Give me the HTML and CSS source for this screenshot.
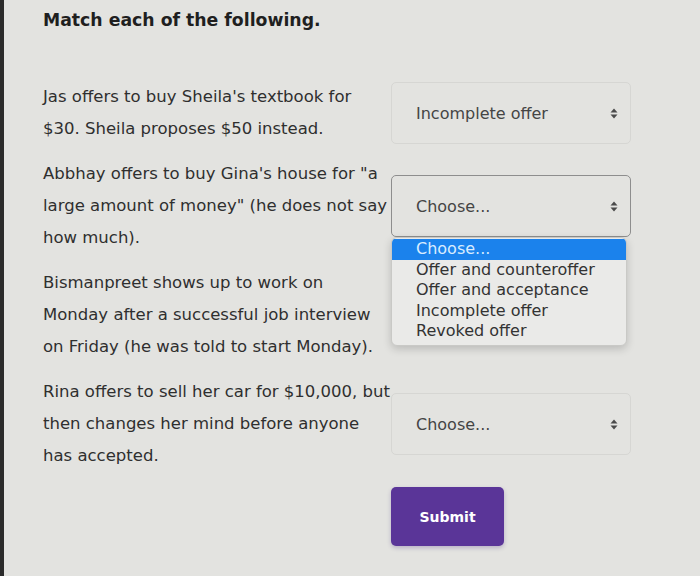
FILE: index.html
```html
<!DOCTYPE html>
<html lang="en">
<head>
<meta charset="utf-8">
<title>Match each of the following.</title>
<link rel="stylesheet" href="styles.css">
</head>
<body>
<main class="quiz">
  <h1 class="title">Match each of the following.</h1>
  <div class="rows">
    <div class="row">
      <p class="prompt">Jas offers to buy Sheila's textbook for $30. Sheila proposes $50 instead.</p>
      <div class="select-wrap">
        <div class="select">
          <span>Incomplete offer</span>
          <svg class="arrows" width="8" height="11" viewBox="0 0 8 11"><path d="M4 0.5 L7.5 4.5 L0.5 4.5 Z M4 10.5 L7.5 6.5 L0.5 6.5 Z"/></svg>
        </div>
      </div>
    </div>
    <div class="row">
      <p class="prompt">Abbhay offers to buy Gina's house for "a large amount of money" (he does not say how much).</p>
      <div class="select-wrap open">
        <div class="select focused">
          <span>Choose...</span>
          <svg class="arrows" width="8" height="11" viewBox="0 0 8 11"><path d="M4 0.5 L7.5 4.5 L0.5 4.5 Z M4 10.5 L7.5 6.5 L0.5 6.5 Z"/></svg>
        </div>
        <ul class="menu">
          <li class="item active">Choose...</li>
          <li class="item">Offer and counteroffer</li>
          <li class="item">Offer and acceptance</li>
          <li class="item">Incomplete offer</li>
          <li class="item">Revoked offer</li>
        </ul>
      </div>
    </div>
    <div class="row">
      <p class="prompt">Bismanpreet shows up to work on Monday after a successful job interview on Friday (he was told to start Monday).</p>
      <div class="select-wrap">
        <div class="select covered">
          <span>Choose...</span>
          <svg class="arrows" width="8" height="11" viewBox="0 0 8 11"><path d="M4 0.5 L7.5 4.5 L0.5 4.5 Z M4 10.5 L7.5 6.5 L0.5 6.5 Z"/></svg>
        </div>
      </div>
    </div>
    <div class="row">
      <p class="prompt">Rina offers to sell her car for $10,000, but then changes her mind before anyone has accepted.</p>
      <div class="select-wrap">
        <div class="select">
          <span>Choose...</span>
          <svg class="arrows" width="8" height="11" viewBox="0 0 8 11"><path d="M4 0.5 L7.5 4.5 L0.5 4.5 Z M4 10.5 L7.5 6.5 L0.5 6.5 Z"/></svg>
        </div>
      </div>
    </div>
  </div>
  <div class="actions">
    <button class="submit" type="button">Submit</button>
  </div>
</main>
</body>
</html>
```
FILE: styles.css
```css
html, body {
  margin: 0;
  padding: 0;
}
body {
  background: #e3e3e0;
  border-left: 4px solid #2b2b2b;
  min-height: 576px;
  box-sizing: border-box;
  font-family: "DejaVu Sans", "Liberation Sans", sans-serif;
  color: #333333;
}
.quiz {
  padding: 8px 0 0 39px;
}
.title {
  margin: 0 0 49px 0;
  font-size: 17.3px;
  line-height: 24px;
  font-weight: 700;
  color: #1f1f1f;
}
.rows {
  display: flex;
  flex-direction: column;
  gap: 13px;
}
.row {
  display: flex;
  align-items: center;
}
.prompt {
  width: 348px;
  margin: 0;
  font-size: 16.5px;
  line-height: 32px;
  color: #2f2f2f;
}
.select-wrap {
  position: relative;
  width: 240px;
}
.select-wrap.open {
  z-index: 2;
}
.select {
  box-sizing: border-box;
  height: 62px;
  border: 1px solid #d6d6d3;
  border-radius: 5px;
  padding: 0 12px 0 24px;
  display: flex;
  align-items: center;
  justify-content: space-between;
  font-size: 16px;
  color: #454545;
}
.select.focused {
  border-color: #8e8e8e;
}
.select.covered {
  visibility: hidden;
}
.arrows {
  fill: #4a4a4a;
}
.menu {
  position: absolute;
  left: 0;
  top: 62px;
  width: 236px;
  box-sizing: border-box;
  margin: 0;
  padding: 1px 0 3px 0;
  list-style: none;
  background: #eaeae8;
  border: 1px solid #c9c9c6;
  border-radius: 6px;
  box-shadow: 0 3px 8px rgba(0, 0, 0, 0.18);
  overflow: hidden;
}
.item {
  height: 20.5px;
  line-height: 20.5px;
  padding-left: 24px;
  font-size: 16px;
  color: #333333;
}
.item.active {
  background: #1b82ec;
  color: #d9ecff;
}
.actions {
  padding: 15px 0 0 348px;
}
.submit {
  width: 113px;
  height: 59px;
  border: none;
  border-radius: 5px;
  background: #5a3598;
  color: #ffffff;
  font-family: "DejaVu Sans", "Liberation Sans", sans-serif;
  font-size: 14px;
  font-weight: 700;
  box-shadow: 0 2px 4px rgba(60, 30, 120, 0.25);
}
```
